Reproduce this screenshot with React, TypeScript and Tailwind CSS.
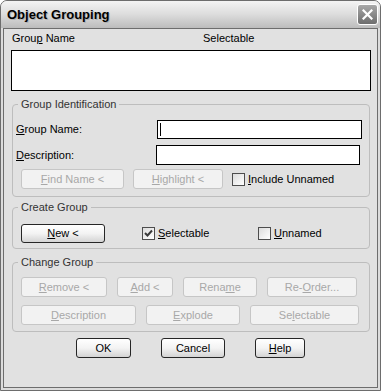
import React from "react";

const font = { fontFamily: '"Liberation Sans", Arial, sans-serif' };

type BtnProps = { w: string; disabled?: boolean; h?: string; className?: string; children: React.ReactNode };

const Btn = ({ w, disabled, h = "h-[20px]", className = "", children }: BtnProps) => (
  <div
    className={`${w} ${h} ${className} shrink-0 flex items-center justify-center rounded-[3px] border text-[11px] leading-none ${
      disabled
        ? "border-[#c6c6c6] bg-[#f2f2f2] text-[#a8a8a8]"
        : "border-[#262626] bg-gradient-to-b from-white via-[#f3f3f3] to-[#d4d4d4] text-black"
    }`}
  >
    {children}
  </div>
);

const Check = ({ checked, label }: { checked?: boolean; label: React.ReactNode }) => (
  <div className="flex items-center shrink-0">
    <div className="w-[13px] h-[13px] border border-[#4d4d4d] bg-gradient-to-br from-[#dcdcdc] to-white flex items-center justify-center">
      {checked && (
        <svg width="9" height="9" viewBox="0 0 9 9">
          <path d="M1 4 L3.5 6.5 L8 1.5" stroke="#3a3a3a" strokeWidth="2" fill="none" />
        </svg>
      )}
    </div>
    <span className="ml-[3px] text-[11px] leading-[13px] text-black">{label}</span>
  </div>
);

const Group = ({ title, className = "", children }: { title: string; className?: string; children: React.ReactNode }) => (
  <fieldset className={`ml-[8px] w-[358px] rounded-[4px] border border-[#bdbdbd] ${className}`}>
    <legend className="ml-[5px] px-[3px] text-[11px] leading-[13px] text-[#333]">{title}</legend>
    {children}
  </fieldset>
);

export default function App() {
  return (
    <div style={font} className="w-[381px] h-[391px] bg-white">
      <div className="w-[381px] h-[391px] rounded-t-[7px] border border-[#6d6d6d] bg-[#dcdcdc] flex flex-col">
        {/* title bar */}
        <div className="h-[27px] shrink-0 rounded-t-[6px] bg-gradient-to-b from-[#f4f4f4] via-[#dcdcdc] to-[#bcbcbc] flex items-center justify-between pl-[6px] pr-[2px]">
          <span className="text-[13px] font-bold text-black [text-shadow:1px_1px_0_#b0b0b0]">Object Grouping</span>
          <div className="w-[21px] h-[21px] rounded-[3px] border border-white bg-gradient-to-b from-[#a8a8a8] to-[#6e6e6e] flex items-center justify-center">
            <svg width="11" height="11" viewBox="0 0 11 11">
              <path d="M1.5 1.5 L9.5 9.5 M9.5 1.5 L1.5 9.5" stroke="white" strokeWidth="2.2" strokeLinecap="square" />
            </svg>
          </div>
        </div>

        {/* client */}
        <div className="flex-1 mx-[2px] mb-[2px] border border-[#6d6d6d] bg-[#e1e1e1] text-black">
          <div className="mt-[3px] ml-[8px] flex text-[11px] leading-[13px]">
            <span className="w-[191px]">
              Grou<u>p</u> Name
            </span>
            <span>Selectable</span>
          </div>
          <div className="mt-[5px] ml-[7px] w-[360px] h-[41px] border border-black bg-white" />

          <Group title="Group Identification" className="mt-[7px] pb-[7px]">
            <div className="mt-[9px] flex items-center">
              <span className="w-[144px] pl-[3px] text-[11px]">
                <u>G</u>roup Name:
              </span>
              <div className="w-[205px] h-[19px] border border-black bg-white flex items-center pl-[2px]">
                <div className="w-px h-[13px] bg-black" />
              </div>
            </div>
            <div className="mt-[6px] flex items-center">
              <span className="w-[143px] pl-[3px] text-[11px]">
                <u>D</u>escription:
              </span>
              <div className="w-[204px] h-[20px] border border-black bg-white" />
            </div>
            <div className="mt-[4px] flex items-center pl-[8px]">
              <Btn w="w-[103px]" disabled>
                <span>
                  <u>F</u>ind Name &lt;
                </span>
              </Btn>
              <Btn w="w-[90px]" disabled className="ml-[9px]">
                <span>
                  <u>H</u>ighlight &lt;
                </span>
              </Btn>
              <div className="ml-[9px]">
                <Check
                  label={
                    <>
                      <u>I</u>nclude Unnamed
                    </>
                  }
                />
              </div>
            </div>
          </Group>

          <Group title="Create Group" className="mt-[4px] pb-[5px]">
            <div className="mt-[10px] flex items-center pl-[8px]">
              <Btn w="w-[84px]" h="h-[19px]">
                <span>
                  <u>N</u>ew &lt;
                </span>
              </Btn>
              <div className="ml-[37px] w-[116px]">
                <Check
                  checked
                  label={
                    <>
                      <u>S</u>electable
                    </>
                  }
                />
              </div>
              <Check
                label={
                  <>
                    <u>U</u>nnamed
                  </>
                }
              />
            </div>
          </Group>

          <Group title="Change Group" className="mt-[7px] pb-[6px]">
            <div className="mt-[8px] flex items-center pl-[8px]">
              <Btn w="w-[86px]" disabled>
                <span>
                  <u>R</u>emove &lt;
                </span>
              </Btn>
              <Btn w="w-[56px]" disabled className="ml-[10px]">
                <span>
                  <u>A</u>dd &lt;
                </span>
              </Btn>
              <Btn w="w-[74px]" disabled className="ml-[10px]">
                <span>
                  Rena<u>m</u>e
                </span>
              </Btn>
              <Btn w="w-[90px]" disabled className="ml-[10px]">
                <span>
                  Re-<u>O</u>rder...
                </span>
              </Btn>
            </div>
            <div className="mt-[8px] flex items-center pl-[8px]">
              <Btn w="w-[115px]" disabled>
                <span>
                  <u>D</u>escription
                </span>
              </Btn>
              <Btn w="w-[94px]" disabled className="ml-[10px]">
                <span>
                  <u>E</u>xplode
                </span>
              </Btn>
              <Btn w="w-[109px]" disabled className="ml-[10px]">
                <span>
                  Se<u>l</u>ectable
                </span>
              </Btn>
            </div>
          </Group>

          <div className="mt-[6px] flex items-center pl-[72px]">
            <Btn w="w-[55px]">OK</Btn>
            <Btn w="w-[64px]" className="ml-[30px]">
              Cancel
            </Btn>
            <Btn w="w-[50px]" className="ml-[30px]">
              <span>
                <u>H</u>elp
              </span>
            </Btn>
          </div>
        </div>
      </div>
    </div>
  );
}
